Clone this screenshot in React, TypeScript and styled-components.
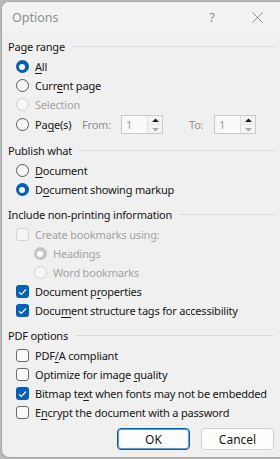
import React from "react";
import styled, { createGlobalStyle, css } from "styled-components";

const Global = createGlobalStyle`
  html, body { margin: 0; padding: 0; overflow: hidden; }
  body {
    background: #b9b9b9;
    font-family: "Noto Sans", "Segoe UI", sans-serif;
    font-size: 11px;
    letter-spacing: -0.2px;
    color: #161616;
  }
`;

const Dialog = styled.div`
  margin: 1px 0 0 1px;
  width: calc(100vw - 1px);
  height: 457px;
  box-sizing: border-box;
  border: 1px solid #a8a8a8;
  border-right: none;
  border-radius: 8px 0 0 8px;
  background: #f0f0f0;
  overflow: hidden;
  display: flex;
  flex-direction: column;
`;

const TitleBar = styled.div`
  height: 30px;
  flex: none;
  background: #f3f3f3;
  display: flex;
  align-items: center;
  padding-left: 10px;
  color: #8d8d8d;
  font-size: 12.5px;
  letter-spacing: 0;
`;

const TitleText = styled.div`
  flex: 1;
`;

const TitleButton = styled.div<{ $w: number }>`
  width: ${(p) => p.$w}px;
  height: 30px;
  display: flex;
  align-items: center;
  justify-content: center;
  color: #8d8d8d;
  font-size: 13px;
`;

const Body = styled.div`
  flex: 1;
  padding: 4px 6px 0 6px;
  display: flex;
  flex-direction: column;
`;

const Section = styled.div<{ $first?: boolean }>`
  margin-top: ${(p) => (p.$first ? 0 : 5)}px;
  display: flex;
  flex-direction: column;
`;

const Heading = styled.div`
  height: 21px;
  display: flex;
  align-items: center;
  gap: 7px;
  white-space: nowrap;
  &::after {
    content: "";
    flex: 1;
    height: 1px;
    background: #dadada;
  }
`;

const Row = styled.label<{ $indent?: number; $h?: number; $disabled?: boolean }>`
  height: ${(p) => p.$h ?? 19}px;
  display: flex;
  align-items: center;
  padding-left: ${(p) => p.$indent ?? 7.5}px;
  gap: 6.5px;
  white-space: nowrap;
  color: ${(p) => (p.$disabled ? "#a3a3a3" : "#161616")};
`;

const Radio = styled.span<{ $checked?: boolean; $disabled?: boolean }>`
  width: 13px;
  height: 13px;
  box-sizing: border-box;
  border-radius: 50%;
  flex: none;
  position: relative;
  ${(p) =>
    p.$checked
      ? css`
          background: ${p.$disabled ? "#c4c4c4" : "#005fb8"};
          &::after {
            content: "";
            position: absolute;
            left: 3.5px;
            top: 3.5px;
            width: 6px;
            height: 6px;
            border-radius: 50%;
            background: #fff;
          }
        `
      : css`
          border: 1px solid ${p.$disabled ? "#cfcfcf" : "#5a5a5a"};
          background: #f7f7f7;
        `}
`;

const Check = styled.span<{ $checked?: boolean; $disabled?: boolean }>`
  width: 13px;
  height: 13px;
  box-sizing: border-box;
  border-radius: 3px;
  flex: none;
  display: flex;
  align-items: center;
  justify-content: center;
  ${(p) =>
    p.$checked
      ? css`
          background: #005fb8;
        `
      : css`
          border: 1px solid ${p.$disabled ? "#d2d2d2" : "#6a6a6a"};
          background: ${p.$disabled ? "#f5f5f5" : "#fbfbfb"};
        `}
`;

const Label = styled.span``;

const U = styled.span`
  text-decoration: underline;
  text-underline-offset: 2px;
`;

const Inline = styled.span<{ $w: number; $ml?: number; $dim?: boolean }>`
  width: ${(p) => p.$w}px;
  margin-left: ${(p) => p.$ml ?? 0}px;
  flex: none;
  color: ${(p) => (p.$dim ? "#8f8f8f" : "#161616")};
`;

const Spin = styled.div`
  width: 42px;
  height: 19px;
  box-sizing: border-box;
  border: 1px solid #c9c9c9;
  background: #fafafa;
  display: flex;
  flex: none;
`;

const SpinValue = styled.div`
  flex: 1;
  padding-left: 4px;
  color: #9a9a9a;
  display: flex;
  align-items: center;
`;

const SpinArrows = styled.div`
  width: 14px;
  display: flex;
  flex-direction: column;
  border-left: 1px solid #e0e0e0;
`;

const SpinArrow = styled.div`
  flex: 1;
  display: flex;
  align-items: center;
  justify-content: center;
  background: #f4f4f4;
  svg {
    display: block;
  }
  & + & {
    border-top: 1px solid #e6e6e6;
  }
`;

const Buttons = styled.div`
  margin-top: 6px;
  display: flex;
  justify-content: flex-end;
  gap: 11px;
`;

const Button = styled.button<{ $default?: boolean }>`
  width: 73px;
  height: 22px;
  box-sizing: border-box;
  border-radius: 4px;
  background: #fdfdfd;
  font-family: inherit;
  font-size: 12px;
  letter-spacing: 0;
  color: #161616;
  padding: 0;
  border: 1px solid ${(p) => (p.$default ? "#005fb8" : "#d0d0d0")};
  ${(p) =>
    p.$default &&
    css`
      box-shadow: inset 0 0 0 1px #5e9bd6;
    `}
`;

const CheckMark = () => (
  <svg width="9" height="8" viewBox="0 0 9 8">
    <path d="M1 4.2 L3.4 6.5 L8 1.5" fill="none" stroke="#fff" strokeWidth="1.2" />
  </svg>
);

const RadioRow = ({
  children,
  checked,
  disabled,
  indent,
}: {
  children: React.ReactNode;
  checked?: boolean;
  disabled?: boolean;
  indent?: number;
}) => (
  <Row $indent={indent} $disabled={disabled}>
    <Radio $checked={checked} $disabled={disabled} />
    <Label>{children}</Label>
  </Row>
);

const CheckRow = ({
  children,
  checked,
  disabled,
}: {
  children: React.ReactNode;
  checked?: boolean;
  disabled?: boolean;
}) => (
  <Row $disabled={disabled}>
    <Check $checked={checked} $disabled={disabled}>
      {checked && <CheckMark />}
    </Check>
    <Label>{children}</Label>
  </Row>
);

const SpinBox = () => (
  <Spin>
    <SpinValue>1</SpinValue>
    <SpinArrows>
      <SpinArrow>
        <svg width="7" height="5" viewBox="0 0 7 5">
          <path d="M0 4 L3.5 0.5 L7 4 Z" fill="#1b1b1b" />
        </svg>
      </SpinArrow>
      <SpinArrow>
        <svg width="7" height="5" viewBox="0 0 7 5">
          <path d="M0 1 L3.5 4.5 L7 1 Z" fill="#a8a8a8" />
        </svg>
      </SpinArrow>
    </SpinArrows>
  </Spin>
);

export default function App() {
  return (
    <>
      <Global />
      <Dialog>
        <TitleBar>
          <TitleText>Options</TitleText>
          <TitleButton $w={44}>?</TitleButton>
          <TitleButton $w={46}>
            <svg width="11" height="11" viewBox="0 0 11 11">
              <path d="M0.5 0.5 L10.5 10.5 M10.5 0.5 L0.5 10.5" stroke="#8d8d8d" strokeWidth="1" />
            </svg>
          </TitleButton>
        </TitleBar>
        <Body>
          <Section $first>
            <Heading>Page range</Heading>
            <RadioRow checked>
              <U>A</U>ll
            </RadioRow>
            <RadioRow>
              Curr<U>e</U>nt page
            </RadioRow>
            <RadioRow disabled>Selection</RadioRow>
            <Row $h={21}>
              <Radio />
              <Inline $w={40.5}>
                Pa<U>g</U>e(s)
              </Inline>
              <Inline $w={32.5} $dim>
                From:
              </Inline>
              <SpinBox />
              <Inline $w={18.5} $ml={19.5} $dim>
                To:
              </Inline>
              <SpinBox />
            </Row>
          </Section>
          <Section>
            <Heading>Publish what</Heading>
            <RadioRow>
              <U>D</U>ocument
            </RadioRow>
            <RadioRow checked>
              D<U>o</U>cument showing markup
            </RadioRow>
          </Section>
          <Section>
            <Heading>Include non-printing information</Heading>
            <CheckRow disabled>Create bookmarks using:</CheckRow>
            <RadioRow disabled checked indent={25.5}>
              Headings
            </RadioRow>
            <RadioRow disabled indent={25.5}>
              Word bookmarks
            </RadioRow>
            <CheckRow checked>
              Document p<U>r</U>operties
            </CheckRow>
            <CheckRow checked>
              Docu<U>m</U>ent structure tags for accessibility
            </CheckRow>
          </Section>
          <Section>
            <Heading>PDF options</Heading>
            <CheckRow>
              PDF<U>/</U>A compliant
            </CheckRow>
            <CheckRow>
              Optimize for image <U>q</U>uality
            </CheckRow>
            <CheckRow checked>
              Bitmap te<U>x</U>t when fonts may not be embedded
            </CheckRow>
            <CheckRow>
              E<U>n</U>crypt the document with a password
            </CheckRow>
          </Section>
          <Buttons>
            <Button $default>OK</Button>
            <Button>Cancel</Button>
          </Buttons>
        </Body>
      </Dialog>
    </>
  );
}
